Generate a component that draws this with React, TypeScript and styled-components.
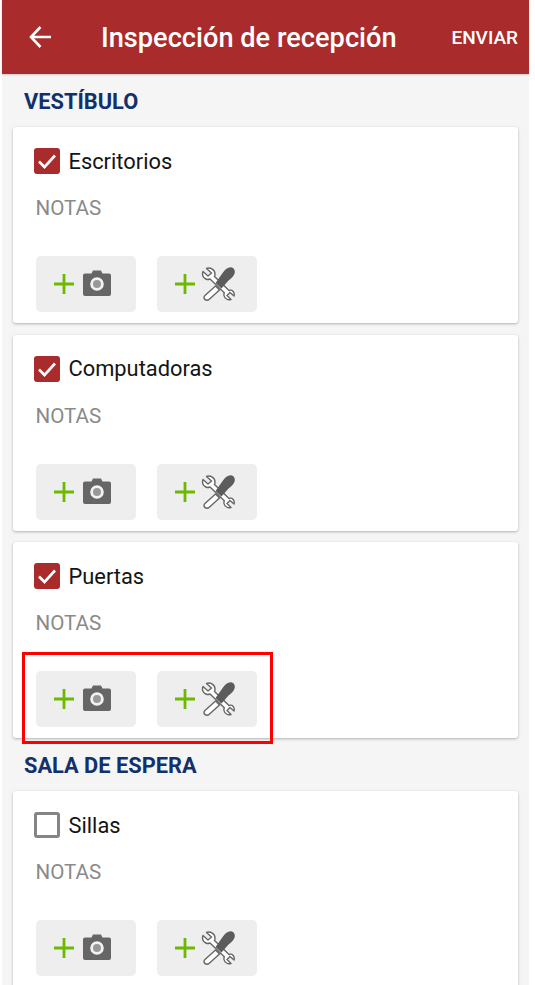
import { createGlobalStyle, styled } from 'styled-components';

const GlobalStyle = createGlobalStyle`
  html, body {
    margin: 0;
    padding: 0;
    background: #fff;
  }
  body {
    font-family: Roboto, "Liberation Sans", sans-serif;
  }
`;

const Page = styled.div`
  width: 535px;
  height: 985px;
  overflow: hidden;
  padding: 0 6px 0 2px;
  box-sizing: border-box;
`;

const Screen = styled.div`
  position: relative;
  height: 100%;
  background: #f5f5f5;
`;

const Header = styled.header`
  height: 74px;
  background: #a92b2b;
  display: flex;
  align-items: center;
  color: #fff;
  box-shadow: 0 1px 2px rgba(0, 0, 0, 0.18);
`;

const BackButton = styled.div`
  width: 99px;
  display: flex;
  padding-left: 26px;
  box-sizing: border-box;
`;

const Title = styled.h1`
  flex: 1;
  margin: 0;
  padding-top: 1px;
  font-size: 27.2px;
  font-weight: 500;
  white-space: nowrap;
`;

const Send = styled.span`
  font-size: 19px;
  font-weight: 500;
  margin-right: 11px;
`;

const Content = styled.main`
  padding: 0 11px;
`;

const SectionTitle = styled.h2`
  margin: 0;
  height: 53px;
  padding: 15px 0 0 11px;
  box-sizing: border-box;
  font-size: 21.8px;
  line-height: 26px;
  font-weight: 700;
  color: #12306b;
`;

const CardList = styled.div`
  display: flex;
  flex-direction: column;
  gap: 11.5px;
`;

const Card = styled.section`
  background: #fff;
  border-radius: 3px;
  height: 196px;
  padding: 21px 23px 0 21px;
  box-sizing: border-box;
  box-shadow: 0 1px 3px rgba(0, 0, 0, 0.28);
`;

const CheckRow = styled.div`
  display: flex;
  align-items: center;
  gap: 8.5px;
  height: 26px;
  font-size: 21.85px;
  color: #141414;
`;

const CheckBox = styled.div<{ $checked: boolean }>`
  width: 26px;
  height: 26px;
  box-sizing: border-box;
  border-radius: 3px;
  display: flex;
  align-items: center;
  justify-content: center;
  background: ${(p) => (p.$checked ? '#a92b2b' : '#fff')};
  border: ${(p) => (p.$checked ? 'none' : '3px solid #858585')};
`;

const Notes = styled.div`
  margin: 22px 0 0 1.5px;
  font-size: 20.6px;
  line-height: 24px;
  color: #8a8a8a;
`;

const Actions = styled.div`
  display: flex;
  gap: 21.5px;
  margin: 36px 0 0 2px;
`;

const ActionButton = styled.button<{ $gap: number }>`
  width: 99.5px;
  height: 56px;
  padding: 0 0 0 17.5px;
  border: none;
  border-radius: 5px;
  background: #eeeeee;
  display: flex;
  align-items: center;
  gap: ${(p) => p.$gap}px;
`;

const Highlight = styled.div`
  position: absolute;
  left: 20px;
  top: 652px;
  width: 251px;
  height: 92px;
  box-sizing: border-box;
  border: 3px solid #ff0000;
  pointer-events: none;
`;

const ArrowIcon = () => (
  <svg width="24" height="24" viewBox="0 0 24 24" fill="none" stroke="#fff" strokeWidth="2.6">
    <path d="M23 12H3M12.5 2L3 12L12.5 22" />
  </svg>
);

const CheckIcon = () => (
  <svg width="20" height="20" viewBox="0 0 20 20" fill="none" stroke="#fff" strokeWidth="2.6">
    <path d="M2 10.5L7.5 16L18 4.5" />
  </svg>
);

const PlusIcon = () => (
  <svg width="20" height="20" viewBox="0 0 20 20" fill="none" stroke="#6db800" strokeWidth="2.8">
    <path d="M10 0V20M0 10H20" />
  </svg>
);

const CameraIcon = () => (
  <svg width="28" height="28" viewBox="0 0 28 28">
    <path
      fill="#666"
      d="M2 3.5H8.5L10 0.5H18L19.5 3.5H26A2 2 0 0 1 28 5.5V24A2 2 0 0 1 26 26H2A2 2 0 0 1 0 24V5.5A2 2 0 0 1 2 3.5Z"
    />
    <circle cx="14" cy="14" r="5.4" fill="#999" stroke="#f2f2f2" strokeWidth="2.8" />
  </svg>
);

const ToolsIcon = () => (
  <svg width="34" height="34" viewBox="0 0 34 34">
    <path
      fill="#fff"
      stroke="#666"
      strokeWidth="1.4"
      strokeLinejoin="round"
      d="M2 4.5L7 9L10.5 6L5.5 1.5C9.5 0 14 3 14 7C14 8 13.8 8.8 13.5 9.5L28 23.5C29 23 30 23 31 23.3C33 24.5 33.5 27 33 29L29 25.5L26 28.5L30 32.5C27 33.5 23.5 31.5 23 28.5C22.8 27.5 23 26.5 23.3 25.8L9 12C7.5 12.6 6 12.6 4.8 12C2 11 0.8 7.5 2 4.5Z"
    />
    <path
      fill="#fff"
      stroke="#666"
      strokeWidth="1.4"
      strokeLinejoin="round"
      d="M14.5 19L18.5 23L8 32.5C7 33.5 4.5 33.5 3.5 32C2.7 30.8 3 29.5 4 28.5Z"
    />
    <path
      fill="#5c5c5c"
      d="M14.5 16L22 5.5C24 2.5 27 0 30 0.3C33 0.6 34.3 3.5 33.7 6C33 9 30 11.5 27.5 13.5L20.5 21.5Z"
    />
  </svg>
);

type ItemProps = { label: string; checked: boolean };

const Item = ({ label, checked }: ItemProps) => (
  <Card>
    <CheckRow>
      <CheckBox $checked={checked}>{checked && <CheckIcon />}</CheckBox>
      {label}
    </CheckRow>
    <Notes>NOTAS</Notes>
    <Actions>
      <ActionButton $gap={9.5}>
        <PlusIcon />
        <CameraIcon />
      </ActionButton>
      <ActionButton $gap={6}>
        <PlusIcon />
        <ToolsIcon />
      </ActionButton>
    </Actions>
  </Card>
);

export default function App() {
  return (
    <Page>
      <GlobalStyle />
      <Screen>
        <Header>
          <BackButton>
            <ArrowIcon />
          </BackButton>
          <Title>Inspección de recepción</Title>
          <Send>ENVIAR</Send>
        </Header>
        <Content>
          <SectionTitle>VESTÍBULO</SectionTitle>
          <CardList>
            <Item label="Escritorios" checked />
            <Item label="Computadoras" checked />
            <Item label="Puertas" checked />
          </CardList>
          <SectionTitle>SALA DE ESPERA</SectionTitle>
          <CardList>
            <Item label="Sillas" checked={false} />
          </CardList>
        </Content>
        <Highlight />
      </Screen>
    </Page>
  );
}
